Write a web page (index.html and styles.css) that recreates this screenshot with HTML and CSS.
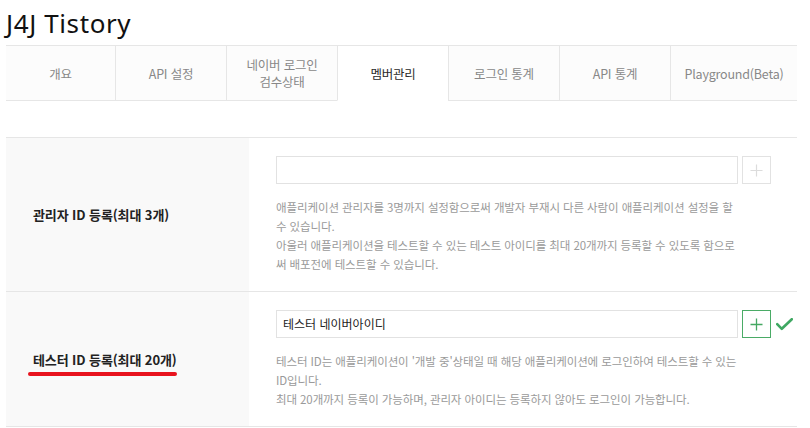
FILE: index.html
```html
<!DOCTYPE html>
<html lang="ko">
<head>
<meta charset="utf-8">
<title>J4J Tistory</title>
<link rel="stylesheet" href="styles.css">
</head>
<body>
<div class="page">
  <h1 class="title">J4J Tistory</h1>
  <nav class="tabs">
    <div class="tab">개요</div>
    <div class="tab">API 설정</div>
    <div class="tab">네이버 로그인<br>검수상태</div>
    <div class="tab active">멤버관리</div>
    <div class="tab">로그인 통계</div>
    <div class="tab">API 통계</div>
    <div class="tab">Playground(Beta)</div>
  </nav>

  <div class="rows">
    <div class="row">
      <div class="label"><span class="label-text">관리자 ID 등록(최대 3개)</span></div>
      <div class="field">
        <div class="input-line">
          <div class="input"></div>
          <div class="add-btn">
            <svg width="13" height="13" viewBox="0 0 13 13"><path d="M6.5 0.5v12M0.5 6.5h12" stroke="#dcdcdc" stroke-width="1.2" fill="none"/></svg>
          </div>
        </div>
        <p class="desc">애플리케이션 관리자를 3명까지 설정함으로써 개발자 부재시 다른 사람이 애플리케이션 설정을 할<br>수 있습니다.<br>아울러 애플리케이션을 테스트할 수 있는 테스트 아이디를 최대 20개까지 등록할 수 있도록 함으로<br>써 배포전에 테스트할 수 있습니다.</p>
      </div>
    </div>
    <div class="row">
      <div class="label"><span class="label-text marked">테스터 ID 등록(최대 20개)</span></div>
      <div class="field">
        <div class="input-line">
          <div class="input filled">테스터 네이버아이디</div>
          <div class="add-btn green">
            <svg width="13" height="13" viewBox="0 0 13 13"><path d="M6.5 0.5v12M0.5 6.5h12" stroke="#45a862" stroke-width="1.3" fill="none"/></svg>
          </div>
          <svg class="check" width="17" height="13" viewBox="0 0 17 13"><path d="M1.2 6.2l4.6 4.6L15.8 1.2" stroke="#3fa862" stroke-width="2.6" fill="none" stroke-linecap="round" stroke-linejoin="round"/></svg>
        </div>
        <p class="desc">테스터 ID는 애플리케이션이 '개발 중'상태일 때 해당 애플리케이션에 로그인하여 테스트할 수 있는<br>ID입니다.<br>최대 20개까지 등록이 가능하며, 관리자 아이디는 등록하지 않아도 로그인이 가능합니다.</p>
      </div>
    </div>
  </div>
</div>
</body>
</html>
```

FILE: styles.css
```css
* { box-sizing: border-box; }

html, body {
  margin: 0;
  padding: 0;
  background: #ffffff;
}

body {
  font-family: "Noto Sans CJK KR", "Noto Sans", sans-serif;
  color: #222;
}

.page {
  width: 791px;
  margin-left: 6px;
}

.title {
  margin: 0 0 7px 0;
  padding-top: 8px;
  font-family: "Noto Sans", "Noto Sans CJK KR", sans-serif;
  font-weight: 400;
  font-size: 26px;
  line-height: 30px;
  letter-spacing: 0.6px;
  color: #111;
}

.tabs {
  display: grid;
  grid-template-columns: 109px 111px 111px 111px 111px 111px 127px;
  height: 56px;
}

.tab {
  display: flex;
  align-items: center;
  justify-content: center;
  text-align: center;
  background: #fcfcfc;
  border-top: 1px solid #e6e6e6;
  border-bottom: 1px solid #e6e6e6;
  color: #888888;
  font-size: 12.5px;
  line-height: 17px;
  letter-spacing: -0.2px;
}

.tab + .tab {
  border-left: 1px solid #e6e6e6;
}

.tab.active {
  background: #ffffff;
  color: #2a2a2a;
  border-bottom-color: #ffffff;
}

.rows {
  margin-top: 36px;
  border-top: 1px solid #e6e6e6;
}

.row {
  display: grid;
  grid-template-columns: 243px 1fr;
  border-bottom: 1px solid #e6e6e6;
}

.label {
  display: flex;
  align-items: center;
  background: #f9f9f9;
  padding-left: 27px;
  font-size: 13px;
  font-weight: 700;
  color: #222;
  letter-spacing: -0.1px;
}

.label-text {
  position: relative;
}

.label-text.marked::after {
  content: "";
  position: absolute;
  left: -5px;
  right: 0;
  bottom: -7px;
  height: 4px;
  border-radius: 2px;
  background: #e8131e;
}

.field {
  padding: 18px 0 17px 27px;
}

.input-line {
  display: flex;
  align-items: center;
}

.input {
  width: 462px;
  height: 28px;
  border: 1px solid #e2e2e2;
  background: #fff;
  padding-left: 6px;
  font-size: 12px;
  line-height: 26px;
  color: #222;
}

.add-btn {
  width: 29px;
  height: 28px;
  margin-left: 4px;
  border: 1px solid #e2e2e2;
  display: flex;
  align-items: center;
  justify-content: center;
  background: #fff;
}

.add-btn.green {
  border-color: #4aab66;
}

.check {
  margin-left: 5px;
}

.desc {
  margin: 14px 0 0 0;
  font-size: 11.5px;
  line-height: 19px;
  color: #9a9a9a;
  letter-spacing: -0.1px;
  white-space: nowrap;
}
```
